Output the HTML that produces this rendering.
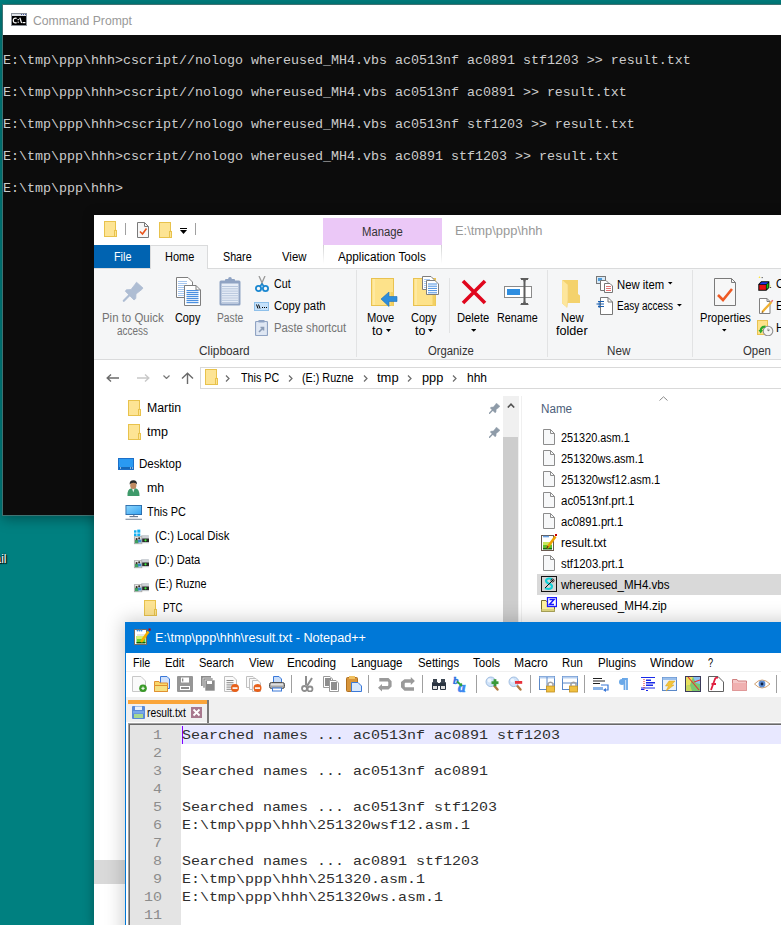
<!DOCTYPE html><html><head><meta charset="utf-8"><style>
html,body{margin:0;padding:0;}
body{width:781px;height:925px;overflow:hidden;position:relative;background:#008080;font-family:"Liberation Sans",sans-serif;}
.t{position:absolute;white-space:pre;transform-origin:0 0;}
.r{position:absolute;}
</style></head><body>
<div class="r" style="left:2px;top:4px;width:800px;height:512px;box-sizing:border-box;border:1px solid rgba(90,110,110,0.7);box-shadow:0 3px 12px rgba(0,0,0,0.35);"></div>
<div class="r" style="left:3px;top:5px;width:800px;height:30px;background:#fff;"></div>
<div class="r" style="left:3px;top:35px;width:800px;height:480px;background:#0c0c0c;"></div>
<div class="t" style="left:32.90px;top:12.64px;font-size:12.00px;line-height:16px;color:#999;transform-origin:0 12.16px;transform:scale(1.0168,1.0000);">Command Prompt</div>
<svg class="r" style="left:11px;top:13px;" width="16" height="13" viewBox="0 0 16 13"><rect x="0" y="0" width="16" height="13" fill="#8c929a"/><rect x="1" y="1" width="14" height="2" fill="#dde1e6"/><rect x="10" y="1" width="1" height="1" fill="#4a5a9a"/><rect x="12" y="1" width="1" height="1" fill="#4a5a9a"/><rect x="14" y="1" width="1" height="1" fill="#4a5a9a"/><rect x="1" y="3" width="14" height="9" fill="#000"/><path d="M5.6 5.4Q2.3 4.6 2.3 7.5Q2.3 10.4 5.6 9.6" stroke="#fff" stroke-width="1.3" fill="none"/><rect x="6.6" y="6" width="1.2" height="1.2" fill="#fff"/><rect x="6.6" y="8.6" width="1.2" height="1.2" fill="#fff"/><path d="M8.8 4.8L10.6 10" stroke="#fff" stroke-width="1.2"/><rect x="11.6" y="9" width="2.8" height="1.2" fill="#fff"/></svg>
<div class="t" style="left:-5.5px;top:552px;font-size:12px;line-height:14px;color:#fff;text-shadow:0 0 2px #000,1px 1px 1px #000;">ail</div>
<div class="t" style="left:3.00px;top:52.15px;font-size:13.33px;line-height:17px;color:#cccccc;;font-family:'Liberation Mono',monospace">E:\tmp\ppp\hhh&gt;cscript//nologo whereused_MH4.vbs ac0513nf ac0891 stf1203 &gt;&gt; result.txt</div>
<div class="t" style="left:3.00px;top:84.15px;font-size:13.33px;line-height:17px;color:#cccccc;;font-family:'Liberation Mono',monospace">E:\tmp\ppp\hhh&gt;cscript//nologo whereused_MH4.vbs ac0513nf ac0891 &gt;&gt; result.txt</div>
<div class="t" style="left:3.00px;top:116.15px;font-size:13.33px;line-height:17px;color:#cccccc;;font-family:'Liberation Mono',monospace">E:\tmp\ppp\hhh&gt;cscript//nologo whereused_MH4.vbs ac0513nf stf1203 &gt;&gt; result.txt</div>
<div class="t" style="left:3.00px;top:148.15px;font-size:13.33px;line-height:17px;color:#cccccc;;font-family:'Liberation Mono',monospace">E:\tmp\ppp\hhh&gt;cscript//nologo whereused_MH4.vbs ac0891 stf1203 &gt;&gt; result.txt</div>
<div class="t" style="left:3.00px;top:180.15px;font-size:13.33px;line-height:17px;color:#cccccc;;font-family:'Liberation Mono',monospace">E:\tmp\ppp\hhh&gt;</div>
<div class="r" style="left:94px;top:215px;width:700px;height:710px;background:#fff;box-shadow:0 0 10px 1px rgba(0,0,0,0.28);"></div>
<div class="r" style="left:94px;top:245px;width:56px;height:23px;background:#0063b1;"></div>
<div class="t" style="left:113.50px;top:248.94px;font-size:12.00px;line-height:16px;color:#fff;transform-origin:0 12.16px;transform:scale(0.9000,1.0000);">File</div>
<div class="r" style="left:323px;top:218px;width:119px;height:27px;background:#ebc8f7;"></div>
<div class="r" style="left:94px;top:268px;width:700px;height:92px;background:#f5f6f7;border-top:1px solid #dadbdc;border-bottom:1px solid #dadbdc;box-sizing:border-box;"></div>
<div class="r" style="left:150px;top:245px;width:58px;height:24px;background:#f5f6f7;border:1px solid #dadbdc;border-bottom:none;box-sizing:border-box;"></div>
<div class="r" style="left:323px;top:245px;width:1px;height:19px;background:linear-gradient(#d0d1d2,rgba(218,219,220,0));"></div>
<div class="r" style="left:441px;top:245px;width:1px;height:19px;background:linear-gradient(#d0d1d2,rgba(218,219,220,0));"></div>
<div class="t" style="left:164.50px;top:248.94px;font-size:12.00px;line-height:16px;color:#000;transform-origin:0 12.16px;transform:scale(0.9154,1.0000);">Home</div>
<div class="t" style="left:223.00px;top:248.94px;font-size:12.00px;line-height:16px;color:#000;transform-origin:0 12.16px;transform:scale(0.8931,1.0000);">Share</div>
<div class="t" style="left:281.60px;top:248.94px;font-size:12.00px;line-height:16px;color:#000;transform-origin:0 12.16px;transform:scale(0.9460,1.0000);">View</div>
<div class="t" style="left:337.50px;top:249.14px;font-size:12.00px;line-height:16px;color:#000;transform-origin:0 12.16px;transform:scale(0.9774,1.0000);">Application Tools</div>
<div class="t" style="left:361.60px;top:224.24px;font-size:12.00px;line-height:16px;color:#333;transform-origin:0 12.16px;transform:scale(0.9409,1.0000);">Manage</div>
<div class="t" style="left:455.30px;top:222.64px;font-size:12.00px;line-height:16px;color:#999;transform-origin:0 12.16px;transform:scale(1.0751,1.0000);">E:\tmp\ppp\hhh</div>
<div class="t" style="left:102.30px;top:310.44px;font-size:12.00px;line-height:16px;color:#737373;transform-origin:0 12.16px;transform:scale(0.9522,1.0000);">Pin to Quick</div>
<div class="t" style="left:117.30px;top:323.14px;font-size:12.00px;line-height:16px;color:#737373;transform-origin:0 12.16px;transform:scale(0.8301,1.0000);">access</div>
<div class="t" style="left:174.60px;top:310.44px;font-size:12.00px;line-height:16px;color:#000;transform-origin:0 12.16px;transform:scale(0.9032,1.0000);">Copy</div>
<div class="t" style="left:216.50px;top:310.44px;font-size:12.00px;line-height:16px;color:#737373;transform-origin:0 12.16px;transform:scale(0.8571,1.0000);">Paste</div>
<div class="t" style="left:199.30px;top:343.44px;font-size:12.00px;line-height:16px;color:#333;transform-origin:0 12.16px;transform:scale(0.9871,1.0000);">Clipboard</div>
<div class="t" style="left:273.80px;top:276.44px;font-size:12.00px;line-height:16px;color:#000;transform-origin:0 12.16px;transform:scale(0.8890,1.0000);">Cut</div>
<div class="t" style="left:273.80px;top:298.44px;font-size:12.00px;line-height:16px;color:#000;transform-origin:0 12.16px;transform:scale(0.9433,1.0000);">Copy path</div>
<div class="t" style="left:273.80px;top:320.44px;font-size:12.00px;line-height:16px;color:#737373;transform-origin:0 12.16px;transform:scale(0.9413,1.0000);">Paste shortcut</div>
<div class="r" style="left:356px;top:270px;width:1px;height:87px;background:#e2e3e4;"></div>
<div class="t" style="left:367.30px;top:310.44px;font-size:12.00px;line-height:16px;color:#000;transform-origin:0 12.16px;transform:scale(0.9304,1.0000);">Move</div>
<div class="t" style="left:372.30px;top:322.94px;font-size:12.00px;line-height:16px;color:#000;transform-origin:0 12.16px;transform:scale(1.0692,1.0000);">to</div>
<div class="t" style="left:410.60px;top:310.44px;font-size:12.00px;line-height:16px;color:#000;transform-origin:0 12.16px;transform:scale(0.9139,1.0000);">Copy</div>
<div class="t" style="left:414.60px;top:322.94px;font-size:12.00px;line-height:16px;color:#000;transform-origin:0 12.16px;transform:scale(1.0392,1.0000);">to</div>
<div class="t" style="left:427.50px;top:343.44px;font-size:12.00px;line-height:16px;color:#333;transform-origin:0 12.16px;transform:scale(0.9406,1.0000);">Organize</div>
<div class="r" style="left:449px;top:278px;width:1px;height:55px;background:#e2e3e4;"></div>
<div class="t" style="left:457.20px;top:310.44px;font-size:12.00px;line-height:16px;color:#000;transform-origin:0 12.16px;transform:scale(0.9312,1.0000);">Delete</div>
<div class="t" style="left:497.10px;top:310.44px;font-size:12.00px;line-height:16px;color:#000;transform-origin:0 12.16px;transform:scale(0.8973,1.0000);">Rename</div>
<div class="r" style="left:547px;top:270px;width:1px;height:87px;background:#e2e3e4;"></div>
<div class="t" style="left:561.00px;top:310.44px;font-size:12.00px;line-height:16px;color:#000;transform-origin:0 12.16px;transform:scale(0.9456,1.0000);">New</div>
<div class="t" style="left:556.40px;top:323.44px;font-size:12.00px;line-height:16px;color:#000;transform-origin:0 12.16px;transform:scale(1.0527,1.0000);">folder</div>
<div class="t" style="left:616.50px;top:276.74px;font-size:12.00px;line-height:16px;color:#000;transform-origin:0 12.16px;transform:scale(0.9418,1.0000);">New item</div>
<div class="t" style="left:616.50px;top:298.44px;font-size:12.00px;line-height:16px;color:#000;transform-origin:0 12.16px;transform:scale(0.8328,1.0000);">Easy access</div>
<div class="t" style="left:606.90px;top:343.44px;font-size:12.00px;line-height:16px;color:#333;transform-origin:0 12.16px;transform:scale(0.9706,1.0000);">New</div>
<div class="r" style="left:692px;top:270px;width:1px;height:87px;background:#e2e3e4;"></div>
<div class="t" style="left:699.70px;top:310.44px;font-size:12.00px;line-height:16px;color:#000;transform-origin:0 12.16px;transform:scale(0.9270,1.0000);">Properties</div>
<div class="t" style="left:743.40px;top:343.44px;font-size:12.00px;line-height:16px;color:#333;transform-origin:0 12.16px;transform:scale(0.9504,1.0000);">Open</div>
<div class="t" style="left:776.00px;top:276.44px;font-size:12.00px;line-height:16px;color:#000;transform-origin:0 12.16px;transform:scale(0.9400,1.0000);">O</div>
<div class="t" style="left:776.00px;top:298.44px;font-size:12.00px;line-height:16px;color:#000;transform-origin:0 12.16px;transform:scale(0.9400,1.0000);">E</div>
<div class="t" style="left:776.00px;top:320.44px;font-size:12.00px;line-height:16px;color:#000;transform-origin:0 12.16px;transform:scale(0.9400,1.0000);">H</div>
<div class="r" style="left:200px;top:367px;width:600px;height:22px;background:#fff;border:1px solid #d9d9d9;box-sizing:border-box;"></div>
<div class="t" style="left:240.70px;top:370.04px;font-size:12.00px;line-height:16px;color:#000;transform-origin:0 12.16px;transform:scale(0.8975,1.0000);">This PC</div>
<div class="t" style="left:302.30px;top:370.04px;font-size:12.00px;line-height:16px;color:#000;transform-origin:0 12.16px;transform:scale(0.8979,1.0000);">(E:) Ruzne</div>
<div class="t" style="left:376.70px;top:370.04px;font-size:12.00px;line-height:16px;color:#000;transform-origin:0 12.16px;transform:scale(1.0797,1.0000);">tmp</div>
<div class="t" style="left:422.00px;top:370.04px;font-size:12.00px;line-height:16px;color:#000;transform-origin:0 12.16px;transform:scale(1.0639,1.0000);">ppp</div>
<div class="t" style="left:466.70px;top:370.04px;font-size:12.00px;line-height:16px;color:#000;transform-origin:0 12.16px;transform:scale(0.9990,1.0000);">hhh</div>
<div class="t" style="left:147.40px;top:400.24px;font-size:12.00px;line-height:16px;color:#000;transform-origin:0 12.16px;transform:scale(1.0258,1.0000);">Martin</div>
<div class="t" style="left:147.40px;top:424.24px;font-size:12.00px;line-height:16px;color:#000;transform-origin:0 12.16px;transform:scale(1.0448,1.0000);">tmp</div>
<div class="t" style="left:139.20px;top:456.24px;font-size:12.00px;line-height:16px;color:#000;transform-origin:0 12.16px;transform:scale(0.9632,1.0000);">Desktop</div>
<div class="t" style="left:147.40px;top:480.24px;font-size:12.00px;line-height:16px;color:#000;transform-origin:0 12.16px;transform:scale(1.0318,1.0000);">mh</div>
<div class="t" style="left:147.40px;top:504.24px;font-size:12.00px;line-height:16px;color:#000;transform-origin:0 12.16px;transform:scale(0.9092,1.0000);">This PC</div>
<div class="t" style="left:155.40px;top:528.24px;font-size:12.00px;line-height:16px;color:#000;transform-origin:0 12.16px;transform:scale(0.9456,1.0000);">(C:) Local Disk</div>
<div class="t" style="left:155.40px;top:552.24px;font-size:12.00px;line-height:16px;color:#000;transform-origin:0 12.16px;transform:scale(0.9307,1.0000);">(D:) Data</div>
<div class="t" style="left:155.40px;top:576.24px;font-size:12.00px;line-height:16px;color:#000;transform-origin:0 12.16px;transform:scale(0.8997,1.0000);">(E:) Ruzne</div>
<div class="t" style="left:163.20px;top:600.04px;font-size:12.00px;line-height:16px;color:#000;transform-origin:0 12.16px;transform:scale(0.8167,1.0000);">PTC</div>
<div class="r" style="left:503px;top:396px;width:16px;height:600px;background:#f0f0f0;"></div>
<div class="r" style="left:503px;top:437px;width:15px;height:600px;background:#cdcdcd;"></div>
<div class="r" style="left:521px;top:396px;width:1px;height:600px;background:#f0f0f0;"></div>
<div class="t" style="left:540.70px;top:401.44px;font-size:12.00px;line-height:16px;color:#4c607a;transform-origin:0 12.16px;transform:scale(0.9716,1.0000);">Name</div>
<div class="r" style="left:537px;top:574px;width:260px;height:21px;background:#d9d9d9;"></div>
<div class="t" style="left:561.10px;top:430.04px;font-size:12.00px;line-height:16px;color:#000;transform-origin:0 12.16px;transform:scale(0.9046,1.0000);">251320.asm.1</div>
<div class="t" style="left:561.10px;top:451.04px;font-size:12.00px;line-height:16px;color:#000;transform-origin:0 12.16px;transform:scale(0.9127,1.0000);">251320ws.asm.1</div>
<div class="t" style="left:561.10px;top:472.04px;font-size:12.00px;line-height:16px;color:#000;transform-origin:0 12.16px;transform:scale(0.9236,1.0000);">251320wsf12.asm.1</div>
<div class="t" style="left:561.10px;top:493.04px;font-size:12.00px;line-height:16px;color:#000;transform-origin:0 12.16px;transform:scale(0.9554,1.0000);">ac0513nf.prt.1</div>
<div class="t" style="left:561.10px;top:514.04px;font-size:12.00px;line-height:16px;color:#000;transform-origin:0 12.16px;transform:scale(0.9338,1.0000);">ac0891.prt.1</div>
<div class="t" style="left:561.10px;top:535.04px;font-size:12.00px;line-height:16px;color:#000;transform-origin:0 12.16px;transform:scale(0.9968,1.0000);">result.txt</div>
<div class="t" style="left:561.10px;top:556.04px;font-size:12.00px;line-height:16px;color:#000;transform-origin:0 12.16px;transform:scale(0.9459,1.0000);">stf1203.prt.1</div>
<div class="t" style="left:561.10px;top:577.04px;font-size:12.00px;line-height:16px;color:#000;transform-origin:0 12.16px;transform:scale(0.9626,1.0000);">whereused_MH4.vbs</div>
<div class="t" style="left:561.10px;top:598.04px;font-size:12.00px;line-height:16px;color:#000;transform-origin:0 12.16px;transform:scale(0.9672,1.0000);">whereused_MH4.zip</div>
<div class="r" style="left:94px;top:860px;width:31px;height:24px;background:#d9d9d9;"></div>
<svg class="r" style="left:104px;top:221px;" width="13" height="16" viewBox="0 0 13 16"><rect x="0.5" y="0.5" width="11" height="15" fill="#fde494" stroke="#e8c24c"/><rect x="10.5" y="9.46" width="2" height="6.039999999999999" fill="#fde494" stroke="#e8c24c"/></svg>
<div class="r" style="left:125px;top:223px;width:1px;height:12px;background:#a0a0a0;"></div>
<svg class="r" style="left:137px;top:222px;" width="12" height="16" viewBox="0 0 12 16"><path d="M0.5 0.5H7.5 L11.5 4.5 V15.5 H0.5Z" fill="#f7f7f7" stroke="#7a7a7a"/><path d="M7.5 0.5V4.5H11.5" fill="none" stroke="#7a7a7a"/><path d="M3 9.5L5.5 12L9.5 6.5" fill="none" stroke="#e8541c" stroke-width="1.6"/></svg>
<svg class="r" style="left:159px;top:222px;" width="13" height="16" viewBox="0 0 13 16"><rect x="0.5" y="0.5" width="11" height="15" fill="#fde494" stroke="#e8c24c"/><rect x="10.5" y="9.46" width="2" height="6.039999999999999" fill="#fde494" stroke="#e8c24c"/></svg>
<div class="r" style="left:180px;top:228px;width:7px;height:1px;background:#000;"></div>
<svg class="r" style="left:180px;top:230px;" width="7" height="4" viewBox="0 0 7 4"><path d="M0 0H7L3.5 4Z" fill="#000"/></svg>
<div class="r" style="left:195px;top:223px;width:1px;height:12px;background:#a0a0a0;"></div>
<svg class="r" style="left:118px;top:278px;" width="30" height="28" viewBox="0 0 30 28"><path d="M12 16.5L5.8 22.8" stroke="#aebdd3" stroke-width="2.2" stroke-linecap="round"/><path d="M18.5 4.2L25 10L23.8 11.5L18 16L17.8 20.5L16 22L7.3 13.2L8.3 11.8L13 11.5L17.3 6Z" fill="#aebdd3" stroke="#aebdd3" stroke-width="0.8" stroke-linejoin="round"/></svg>
<svg class="r" style="left:176px;top:277px;" width="25" height="29" viewBox="0 0 25 29"><path d="M0.5 0.5H12L16.5 5V20.5H0.5Z" fill="#fff" stroke="#7e7e7e"/><rect x="2" y="4" width="9" height="1" fill="#a8c8f0"/><rect x="2" y="6" width="9" height="1" fill="#a8c8f0"/><rect x="2" y="8" width="9" height="1" fill="#a8c8f0"/><rect x="2" y="10" width="9" height="1" fill="#a8c8f0"/><rect x="2" y="12" width="9" height="1" fill="#a8c8f0"/><rect x="2" y="14" width="9" height="1" fill="#a8c8f0"/><rect x="2" y="16" width="9" height="1" fill="#a8c8f0"/><rect x="2" y="18" width="9" height="1" fill="#a8c8f0"/><path d="M8.5 8.5H20L24.5 13V28.5H8.5Z" fill="#fff" stroke="#7e7e7e"/><path d="M20 8.5V13H24.5" fill="none" stroke="#7e7e7e"/><rect x="10.5" y="13" width="12" height="1.2" fill="#4a8fe0"/><rect x="10.5" y="15" width="12" height="1.2" fill="#4a8fe0"/><rect x="10.5" y="17" width="12" height="1.2" fill="#4a8fe0"/><rect x="10.5" y="19" width="12" height="1.2" fill="#4a8fe0"/><rect x="10.5" y="21" width="12" height="1.2" fill="#4a8fe0"/><rect x="10.5" y="23" width="12" height="1.2" fill="#4a8fe0"/><rect x="10.5" y="25" width="12" height="1.2" fill="#4a8fe0"/></svg>
<svg class="r" style="left:219px;top:277px;" width="22" height="29" viewBox="0 0 22 29"><rect x="0.5" y="3.5" width="21" height="25" rx="1.5" fill="#8fa3c3"/><rect x="2.5" y="6.5" width="17" height="20" fill="#e6edf7"/><rect x="3" y="9.0" width="16" height="1" fill="#b7c6dc"/><rect x="3" y="11.3" width="16" height="1" fill="#b7c6dc"/><rect x="3" y="13.6" width="16" height="1" fill="#b7c6dc"/><rect x="3" y="15.899999999999999" width="16" height="1" fill="#b7c6dc"/><rect x="3" y="18.2" width="16" height="1" fill="#b7c6dc"/><rect x="3" y="20.5" width="16" height="1" fill="#b7c6dc"/><rect x="3" y="22.799999999999997" width="16" height="1" fill="#b7c6dc"/><rect x="3" y="25.099999999999998" width="16" height="1" fill="#b7c6dc"/><rect x="6" y="2" width="10" height="4" rx="1" fill="#8fa3c3"/><circle cx="11" cy="1.8" r="1.8" fill="#8fa3c3"/></svg>
<svg class="r" style="left:255px;top:276px;" width="14" height="16" viewBox="0 0 14 16"><path d="M4 0L8 9M10 0L6 9" stroke="#9a9a9a" stroke-width="1.3"/><ellipse cx="3.5" cy="12.5" rx="2.6" ry="2.6" fill="none" stroke="#1a87d0" stroke-width="1.8"/><ellipse cx="10.5" cy="12.5" rx="2.6" ry="2.6" fill="none" stroke="#1a87d0" stroke-width="1.8"/><path d="M5 10.5L7 8L9 10.5" stroke="#1a87d0" stroke-width="1.5" fill="none"/></svg>
<svg class="r" style="left:254px;top:302px;" width="15" height="9" viewBox="0 0 15 9"><rect x="0.5" y="0.5" width="14" height="8" fill="#c5e1fa" stroke="#8ec0ea"/><path d="M2.5 2.5L4 6.5M4.5 2.5L6 6.5" stroke="#000" stroke-width="1"/><rect x="8" y="5" width="1" height="1" fill="#000" shape-rendering="crispEdges"/><rect x="10" y="5" width="1" height="1" fill="#000" shape-rendering="crispEdges"/><rect x="12" y="5" width="1" height="1" fill="#000" shape-rendering="crispEdges"/></svg>
<svg class="r" style="left:255px;top:320px;" width="13" height="16" viewBox="0 0 13 16"><rect x="0.5" y="1.5" width="12" height="14" rx="1" fill="#dfe7f3" stroke="#8fa3c3" stroke-width="1.2"/><rect x="3.5" y="0" width="6" height="2.5" fill="#8fa3c3"/><path d="M4 12L8 8M5.5 7.5H8.5V10.5" stroke="#8a9bb5" stroke-width="1.6" fill="none"/></svg>
<svg class="r" style="left:371px;top:278px;" width="27" height="29" viewBox="0 0 27 29"><rect x="0.5" y="0.5" width="22" height="27" fill="#fde28a" stroke="#e9c250"/><rect x="2.5" y="1" width="1" height="26" fill="#fff0b8"/><rect x="19.5" y="14" width="3" height="14" fill="#f2cf62"/><path d="M26 18.5H18V14L10 21L18 28.5V23.5H26Z" fill="#2e8ddb" stroke="#1e6fb8" stroke-width="0.6"/></svg>
<svg class="r" style="left:385.6px;top:329px;" width="5" height="3" viewBox="0 0 5 3"><path d="M0 0H5L2.5 3Z" fill="#000"/></svg>
<svg class="r" style="left:413px;top:276px;" width="27" height="31" viewBox="0 0 27 31"><rect x="0.5" y="2.5" width="22" height="27" fill="#fde28a" stroke="#e9c250"/><rect x="2.5" y="3" width="1" height="26" fill="#fff0b8"/><rect x="19.5" y="17" width="3" height="13" fill="#f2cf62"/><path d="M9.5 0.5H18L21 3.5V13.5H9.5Z" fill="#fff" stroke="#7e7e7e"/><rect x="11" y="3" width="6" height="1" fill="#a8c8f0"/><rect x="11" y="5" width="6" height="1" fill="#a8c8f0"/><rect x="11" y="7" width="6" height="1" fill="#a8c8f0"/><rect x="11" y="9" width="6" height="1" fill="#a8c8f0"/><rect x="11" y="11" width="6" height="1" fill="#a8c8f0"/><path d="M13.5 4.5H22L25.5 8V18.5H13.5Z" fill="#fff" stroke="#7e7e7e"/><rect x="15" y="7.5" width="9" height="1" fill="#4a8fe0"/><rect x="15" y="9.7" width="9" height="1" fill="#4a8fe0"/><rect x="15" y="11.9" width="9" height="1" fill="#4a8fe0"/><rect x="15" y="14.100000000000001" width="9" height="1" fill="#4a8fe0"/><rect x="15" y="16.3" width="9" height="1" fill="#4a8fe0"/></svg>
<svg class="r" style="left:428px;top:329px;" width="5" height="3" viewBox="0 0 5 3"><path d="M0 0H5L2.5 3Z" fill="#000"/></svg>
<svg class="r" style="left:461px;top:279px;" width="26" height="26" viewBox="0 0 26 26"><path d="M2 2L24 24M24 2L2 24" stroke="#e0061d" stroke-width="3.6"/></svg>
<svg class="r" style="left:471px;top:329px;" width="5.4" height="2.7" viewBox="0 0 5.4 2.7"><path d="M0 0H5.4L2.7 2.7Z" fill="#000"/></svg>
<svg class="r" style="left:503px;top:278px;" width="30" height="27" viewBox="0 0 30 27"><rect x="1.5" y="8.5" width="27" height="11" fill="#fff" stroke="#8a8a8a"/><rect x="4" y="11" width="13" height="6" fill="#2f8ee0"/><path d="M18 1H25M18 26H25M21.5 1.5V25.5" stroke="#5e5e5e" stroke-width="2" fill="none"/><path d="M17.5 0.5Q21.5 1 21.5 4M25.5 0.5Q21.5 1 21.5 4M17.5 26.5Q21.5 26 21.5 23M25.5 26.5Q21.5 26 21.5 23" stroke="#5e5e5e" stroke-width="1.2" fill="none"/></svg>
<svg class="r" style="left:561px;top:279px;" width="21" height="30" viewBox="0 0 21 30"><path d="M1.2 1H17V15L19 16.5V24H6V28.5L1.2 24.5Z" fill="#f4d26c"/><path d="M1.2 1L7 6V21L6 28.5L1.2 24.5Z" fill="#fde69c"/><path d="M7 6V21L6 28.5" stroke="#f0d080" stroke-width="0.6" fill="none"/></svg>
<svg class="r" style="left:596px;top:276px;" width="17" height="17" viewBox="0 0 17 17"><rect x="0.5" y="0.5" width="9" height="7" fill="#d6e9f8" stroke="#777"/><rect x="2" y="2" width="4" height="3" fill="#4e9bd8"/><path d="M4.5 4.5H10L12 6.5V14.5H4.5Z" fill="#fff" stroke="#777"/><path d="M8.5 7.5H14L16.5 10V16.5H8.5Z" fill="#fff" stroke="#777"/><rect x="10" y="10" width="5" height="0.8" fill="#e05050"/><rect x="10" y="12" width="5" height="0.8" fill="#e05050"/><rect x="10" y="14" width="5" height="0.8" fill="#e05050"/></svg>
<svg class="r" style="left:668.2px;top:282px;" width="4.5" height="2.6" viewBox="0 0 4.5 2.6"><path d="M0 0H4.5L2.25 2.6Z" fill="#000"/></svg>
<svg class="r" style="left:596px;top:297px;" width="17" height="18" viewBox="0 0 17 18"><path d="M4.5 0.5H12L16.5 5V17.5H4.5Z" fill="#fff" stroke="#777"/><path d="M12 0.5V5H16.5" fill="none" stroke="#777"/><path d="M2 4.5H8M0.5 7H8M2 9.5H8" stroke="#1a5fb0" stroke-width="1.1"/><path d="M3.2 4V11" stroke="#1a5fb0" stroke-width="0.9"/></svg>
<svg class="r" style="left:677px;top:304px;" width="4.9" height="2.6" viewBox="0 0 4.9 2.6"><path d="M0 0H4.9L2.45 2.6Z" fill="#000"/></svg>
<svg class="r" style="left:714px;top:278px;" width="22" height="28" viewBox="0 0 22 28"><path d="M0.5 0.5H17.5 L21.5 4.5 V27.5 H0.5Z" fill="#f7f7f7" stroke="#7a7a7a"/><path d="M17.5 0.5V4.5H21.5" fill="none" stroke="#7a7a7a"/><path d="M4 17L9 22L18 11" fill="none" stroke="#ee5a24" stroke-width="2.6"/></svg>
<svg class="r" style="left:722.2px;top:329.3px;" width="4.6" height="2.6" viewBox="0 0 4.6 2.6"><path d="M0 0H4.6L2.3 2.6Z" fill="#000"/></svg>
<svg class="r" style="left:757px;top:276px;" width="24" height="60" viewBox="0 0 24 60"><path d="M1.3 8.2L4.2 5.3H12.3V11.8L9.4 14.7H1.3Z" fill="#000"/><path d="M2.4 8.2L4.6 6.2H11.3L9.1 8.2Z" fill="#1a3ae8"/><rect x="2.3" y="8.9" width="6.6" height="4.9" fill="#e81010"/><path d="M9.6 8.6L11.5 6.7V11.5L9.6 13.5Z" fill="#18c018"/><path d="M1.5 1.8L2.5 0.3L3.5 1.8Z" fill="#ffe000"/><rect x="4.7" y="1.2" width="0.9" height="0.9" fill="#000"/><rect x="13.2" y="11" width="0.9" height="0.9" fill="#000"/><rect x="12.5" y="9.5" width="1" height="1" fill="#ffe000"/><path d="M2.5 22.5H10L13 25.5V37.5H2.5Z" fill="#fff" stroke="#808080"/><path d="M10 22.5V25.5H13" fill="none" stroke="#808080"/><path d="M5.2 36L14.5 26" stroke="#f0b030" stroke-width="2.2"/><path d="M13.8 25.2L15.3 23.8L16.3 24.8L14.9 26.3Z" fill="#e86060"/><path d="M4.5 37L5.2 35.2L6.4 36.3Z" fill="#604020"/><rect x="0.5" y="44.5" width="10" height="14" fill="#fde28a" stroke="#e9c250"/><circle cx="11" cy="55" r="4.8" fill="#f4f4f4" stroke="#909090" stroke-width="1.1"/><path d="M11 52.5V55L12.8 53.8" stroke="#555" stroke-width="0.7" fill="none"/><path d="M8.5 50.5Q4 50.5 3.5 55" stroke="#2aa82a" stroke-width="2" fill="none"/><path d="M1.5 54L3.7 57.5L6 54Z" fill="#2aa82a"/></svg>
<svg class="r" style="left:106px;top:374px;" width="14" height="8" viewBox="0 0 14 8"><path d="M13 4H1.5M5 0.5L1.2 4L5 7.5" fill="none" stroke="#6b6b6b" stroke-width="1.4"/></svg>
<svg class="r" style="left:136px;top:374px;" width="14" height="8" viewBox="0 0 14 8"><path d="M1 4H12.5M9 0.5L12.8 4L9 7.5" fill="none" stroke="#c8c8c8" stroke-width="1.4"/></svg>
<svg class="r" style="left:163px;top:375px;" width="7" height="4" viewBox="0 0 7 4"><path d="M0.5 0.5L3.5 3.5L6.5 0.5" fill="none" stroke="#777" stroke-width="1.2"/></svg>
<svg class="r" style="left:181px;top:372px;" width="13" height="12" viewBox="0 0 13 12"><path d="M6.5 12V1.5M1 6.5L6.5 1.2L12 6.5" fill="none" stroke="#6b6b6b" stroke-width="1.4"/></svg>
<svg class="r" style="left:205px;top:369px;" width="13" height="16" viewBox="0 0 13 16"><rect x="0.5" y="0.5" width="11" height="15" fill="#fde494" stroke="#e8c24c"/><rect x="10.5" y="9.46" width="2" height="6.039999999999999" fill="#fde494" stroke="#e8c24c"/></svg>
<svg class="r" style="left:224.8px;top:375px;" width="5" height="7" viewBox="0 0 5 7"><path d="M1 0.5L4 3.5L1 6.5" fill="none" stroke="#6b6b6b" stroke-width="1.2"/></svg>
<svg class="r" style="left:287.5px;top:375px;" width="5" height="7" viewBox="0 0 5 7"><path d="M1 0.5L4 3.5L1 6.5" fill="none" stroke="#6b6b6b" stroke-width="1.2"/></svg>
<svg class="r" style="left:362.9px;top:375px;" width="5" height="7" viewBox="0 0 5 7"><path d="M1 0.5L4 3.5L1 6.5" fill="none" stroke="#6b6b6b" stroke-width="1.2"/></svg>
<svg class="r" style="left:407.3px;top:375px;" width="5" height="7" viewBox="0 0 5 7"><path d="M1 0.5L4 3.5L1 6.5" fill="none" stroke="#6b6b6b" stroke-width="1.2"/></svg>
<svg class="r" style="left:452px;top:375px;" width="5" height="7" viewBox="0 0 5 7"><path d="M1 0.5L4 3.5L1 6.5" fill="none" stroke="#6b6b6b" stroke-width="1.2"/></svg>
<svg class="r" style="left:489px;top:403px;" width="11" height="11" viewBox="0 0 11 11"><g transform="translate(-2.6,-2.1) scale(0.54)"><path d="M12 16.5L5.8 22.8" stroke="#8e9ba8" stroke-width="2.6" stroke-linecap="round"/><path d="M18.5 4.2L25 10L23.8 11.5L18 16L17.8 20.5L16 22L7.3 13.2L8.3 11.8L13 11.5L17.3 6Z" fill="#8e9ba8" stroke="#8e9ba8" stroke-width="1" stroke-linejoin="round"/></g></svg>
<svg class="r" style="left:489px;top:427px;" width="11" height="11" viewBox="0 0 11 11"><g transform="translate(-2.6,-2.1) scale(0.54)"><path d="M12 16.5L5.8 22.8" stroke="#8e9ba8" stroke-width="2.6" stroke-linecap="round"/><path d="M18.5 4.2L25 10L23.8 11.5L18 16L17.8 20.5L16 22L7.3 13.2L8.3 11.8L13 11.5L17.3 6Z" fill="#8e9ba8" stroke="#8e9ba8" stroke-width="1" stroke-linejoin="round"/></g></svg>
<svg class="r" style="left:507px;top:403px;" width="8" height="5" viewBox="0 0 8 5"><path d="M0.8 4.5L4 1.2L7.2 4.5" fill="none" stroke="#505050" stroke-width="1.6"/></svg>
<svg class="r" style="left:659px;top:396px;" width="9" height="5" viewBox="0 0 9 5"><path d="M0.5 4.5L4.5 0.8L8.5 4.5" fill="none" stroke="#8a8a8a" stroke-width="1"/></svg>
<svg class="r" style="left:128px;top:400px;" width="13" height="16" viewBox="0 0 13 16"><rect x="0.5" y="0.5" width="11" height="15" fill="#fde494" stroke="#e8c24c"/><rect x="10.5" y="9.46" width="2" height="6.039999999999999" fill="#fde494" stroke="#e8c24c"/></svg>
<svg class="r" style="left:128px;top:424px;" width="13" height="16" viewBox="0 0 13 16"><rect x="0.5" y="0.5" width="11" height="15" fill="#fde494" stroke="#e8c24c"/><rect x="10.5" y="9.46" width="2" height="6.039999999999999" fill="#fde494" stroke="#e8c24c"/></svg>
<svg class="r" style="left:118px;top:458px;" width="16" height="12" viewBox="0 0 16 12"><rect x="0" y="0" width="16" height="12" fill="#1d6fc8"/><rect x="1" y="1" width="14" height="10" fill="#2a9af2"/><rect x="1" y="9" width="14" height="2" fill="#1668b8"/><rect x="2" y="9.5" width="1" height="1" fill="#fff"/><rect x="12" y="9.5" width="1" height="1" fill="#fff"/><rect x="14" y="9.5" width="1" height="1" fill="#fff"/></svg>
<svg class="r" style="left:126px;top:479px;" width="16" height="17" viewBox="0 0 16 17"><path d="M1.5 17Q1 10 5.5 9.3H9.5Q13.5 10 13.5 17Z" fill="#3e9a6a"/><path d="M6 9.5L7.3 13.5L8.6 9.5Z" fill="#e8f4f0"/><ellipse cx="7.3" cy="6.4" rx="3.1" ry="3.5" fill="#c08a60"/><path d="M3.6 5.5Q3.5 1.2 7.5 1.3Q11.3 1.5 11 5.5Q10.2 3.6 7.5 3.7Q5 3.6 3.6 5.5Z" fill="#2a2a2a"/></svg>
<svg class="r" style="left:125px;top:505px;" width="18" height="16" viewBox="0 0 18 16"><defs><linearGradient id="pcg" x1="0" y1="0" x2="1" y2="1"><stop offset="0" stop-color="#8ad4fc"/><stop offset="1" stop-color="#3aa6f2"/></linearGradient></defs><rect x="0.5" y="0" width="16.5" height="10" fill="#2a6aa8"/><rect x="1.4" y="0.9" width="14.7" height="8.2" fill="url(#pcg)"/><rect x="8" y="10" width="1.5" height="1" fill="#8a9ab0"/><rect x="4.5" y="11" width="8.5" height="1.2" fill="#6a7a90"/><rect x="0.5" y="13.7" width="16.5" height="1.2" fill="#8a98a8"/></svg>
<svg class="r" style="left:133px;top:529px;" width="17" height="16" viewBox="0 0 17 16"><rect x="8" y="6" width="8" height="4" rx="0.8" fill="#cdd1d6"/><rect x="8" y="9.5" width="8" height="3.5" fill="#2a2a2a"/><circle cx="12.5" cy="11.3" r="1.1" fill="#3cf03c"/><rect x="8" y="13" width="8" height="1.2" fill="#c4c8cc"/><rect x="1.4" y="7.7" width="7.4" height="7" fill="#f2f2f2" stroke="#a8a8a8" stroke-width="0.9"/><rect x="2" y="11" width="3.5" height="3.2" fill="#40a060"/><rect x="5" y="10.5" width="3.3" height="3" fill="#3a88c8"/><circle cx="3.6" cy="10.2" r="1.1" fill="#3a3028"/><circle cx="6.2" cy="9.3" r="1.1" fill="#3a3028"/><rect x="1" y="1.3" width="2.5" height="2.4" fill="#12aef0"/><rect x="4.3" y="0.6" width="3" height="3.1" fill="#12aef0"/><rect x="1" y="4.5" width="2.5" height="2.6" fill="#12aef0"/><rect x="4.3" y="4.5" width="3" height="2.6" fill="#12aef0"/></svg>
<svg class="r" style="left:133px;top:553px;" width="17" height="16" viewBox="0 0 17 16"><rect x="8" y="6" width="8" height="4" rx="0.8" fill="#cdd1d6"/><rect x="8" y="9.5" width="8" height="3.5" fill="#2a2a2a"/><circle cx="12.5" cy="11.3" r="1.1" fill="#3cf03c"/><rect x="8" y="13" width="8" height="1.2" fill="#c4c8cc"/><rect x="1.4" y="7.7" width="7.4" height="7" fill="#f2f2f2" stroke="#a8a8a8" stroke-width="0.9"/><rect x="2" y="11" width="3.5" height="3.2" fill="#40a060"/><rect x="5" y="10.5" width="3.3" height="3" fill="#3a88c8"/><circle cx="3.6" cy="10.2" r="1.1" fill="#3a3028"/><circle cx="6.2" cy="9.3" r="1.1" fill="#3a3028"/></svg>
<svg class="r" style="left:133px;top:577px;" width="17" height="16" viewBox="0 0 17 16"><rect x="8" y="6" width="8" height="4" rx="0.8" fill="#cdd1d6"/><rect x="8" y="9.5" width="8" height="3.5" fill="#2a2a2a"/><circle cx="12.5" cy="11.3" r="1.1" fill="#3cf03c"/><rect x="8" y="13" width="8" height="1.2" fill="#c4c8cc"/><rect x="1.4" y="7.7" width="7.4" height="7" fill="#f2f2f2" stroke="#a8a8a8" stroke-width="0.9"/><rect x="2" y="11" width="3.5" height="3.2" fill="#40a060"/><rect x="5" y="10.5" width="3.3" height="3" fill="#3a88c8"/><circle cx="3.6" cy="10.2" r="1.1" fill="#3a3028"/><circle cx="6.2" cy="9.3" r="1.1" fill="#3a3028"/></svg>
<svg class="r" style="left:144px;top:600px;" width="13" height="16" viewBox="0 0 13 16"><rect x="0.5" y="0.5" width="11" height="15" fill="#fde494" stroke="#e8c24c"/><rect x="10.5" y="9.46" width="2" height="6.039999999999999" fill="#fde494" stroke="#e8c24c"/></svg>
<svg class="r" style="left:543px;top:429px;" width="12" height="16" viewBox="0 0 12 16"><path d="M0.5 0.5H7.5 L11.5 4.5 V15.5 H0.5Z" fill="#f7f8f9" stroke="#8c8c8c"/><path d="M7.5 0.5V4.5H11.5" fill="none" stroke="#8c8c8c"/></svg>
<svg class="r" style="left:543px;top:450px;" width="12" height="16" viewBox="0 0 12 16"><path d="M0.5 0.5H7.5 L11.5 4.5 V15.5 H0.5Z" fill="#f7f8f9" stroke="#8c8c8c"/><path d="M7.5 0.5V4.5H11.5" fill="none" stroke="#8c8c8c"/></svg>
<svg class="r" style="left:543px;top:471px;" width="12" height="16" viewBox="0 0 12 16"><path d="M0.5 0.5H7.5 L11.5 4.5 V15.5 H0.5Z" fill="#f7f8f9" stroke="#8c8c8c"/><path d="M7.5 0.5V4.5H11.5" fill="none" stroke="#8c8c8c"/></svg>
<svg class="r" style="left:543px;top:492px;" width="12" height="16" viewBox="0 0 12 16"><path d="M0.5 0.5H7.5 L11.5 4.5 V15.5 H0.5Z" fill="#f7f8f9" stroke="#8c8c8c"/><path d="M7.5 0.5V4.5H11.5" fill="none" stroke="#8c8c8c"/></svg>
<svg class="r" style="left:543px;top:513px;" width="12" height="16" viewBox="0 0 12 16"><path d="M0.5 0.5H7.5 L11.5 4.5 V15.5 H0.5Z" fill="#f7f8f9" stroke="#8c8c8c"/><path d="M7.5 0.5V4.5H11.5" fill="none" stroke="#8c8c8c"/></svg>
<svg class="r" style="left:543px;top:555px;" width="12" height="16" viewBox="0 0 12 16"><path d="M0.5 0.5H7.5 L11.5 4.5 V15.5 H0.5Z" fill="#f7f8f9" stroke="#8c8c8c"/><path d="M7.5 0.5V4.5H11.5" fill="none" stroke="#8c8c8c"/></svg>
<svg class="r" style="left:541px;top:534px;" width="16" height="17" viewBox="0 0 16 17"><rect x="0.5" y="1.5" width="12" height="15" fill="#fff" stroke="#6a5a50"/><rect x="2" y="8" width="9" height="7" fill="#5fc02a"/><rect x="2" y="8" width="9" height="3" fill="#c8e85a"/><rect x="2" y="14" width="9" height="1.5" fill="#1a6a10"/><circle cx="3" cy="2.5" r="0.9" fill="#4a90e0"/><circle cx="5" cy="2.5" r="0.9" fill="#4a90e0"/><circle cx="7" cy="2.5" r="0.9" fill="#4a90e0"/><path d="M6 14L14.5 2.5" stroke="#f0a000" stroke-width="2.6"/><path d="M6 14L7 12" stroke="#604020" stroke-width="1.5"/><rect x="14" y="0" width="2" height="2" fill="#c00"/></svg>
<svg class="r" style="left:541px;top:576px;" width="16" height="16" viewBox="0 0 16 16"><rect x="0.5" y="0.5" width="15" height="15" fill="#d4d4d4" stroke="#111"/><path d="M11 3Q6 1.5 5 4.5Q5 7 9 8Q12 9.5 10.5 12Q8 14 4 12" fill="none" stroke="#10d0d8" stroke-width="2.2"/><path d="M4 12L12 4" stroke="#111" stroke-width="1"/><circle cx="11.5" cy="4.5" r="1.5" fill="none" stroke="#111" stroke-width="0.9"/></svg>
<svg class="r" style="left:541px;top:597px;" width="16" height="15" viewBox="0 0 16 15"><path d="M0.5 3.5H5L6 5H13.5V14.5H0.5Z" fill="#fff3a0" stroke="#777030"/><rect x="0.5" y="12" width="13" height="2.5" fill="#e0d880"/><rect x="6.5" y="0.5" width="9" height="9" fill="#fff" stroke="#1a1aff" stroke-width="1.3"/><path d="M8.5 2.5H13L8.5 7.5H13" fill="none" stroke="#1a1aff" stroke-width="1.5"/></svg>
<div class="r" style="left:125px;top:622px;width:700px;height:400px;box-shadow:0 0 18px 2px rgba(0,0,0,0.2);"></div>
<div class="r" style="left:125px;top:622px;width:700px;height:400px;background:#fff;"></div>
<div class="r" style="left:125px;top:622px;width:700px;height:31px;background:#0078d7;"></div>
<div class="r" style="left:125px;top:653px;width:1px;height:300px;background:#0078d7;"></div>
<div class="t" style="left:155.00px;top:630.04px;font-size:12.00px;line-height:16px;color:#fff;transform-origin:0 12.16px;transform:scale(1.0544,1.0000);">E:\tmp\ppp\hhh\result.txt - Notepad++</div>
<div class="t" style="left:133.20px;top:655.24px;font-size:12.00px;line-height:16px;color:#000;transform-origin:0 12.16px;transform:scale(0.8948,1.0000);">File</div>
<div class="t" style="left:164.90px;top:655.24px;font-size:12.00px;line-height:16px;color:#000;transform-origin:0 12.16px;transform:scale(0.9382,1.0000);">Edit</div>
<div class="t" style="left:198.70px;top:655.24px;font-size:12.00px;line-height:16px;color:#000;transform-origin:0 12.16px;transform:scale(0.9205,1.0000);">Search</div>
<div class="t" style="left:248.50px;top:655.24px;font-size:12.00px;line-height:16px;color:#000;transform-origin:0 12.16px;transform:scale(0.9499,1.0000);">View</div>
<div class="t" style="left:287.40px;top:655.24px;font-size:12.00px;line-height:16px;color:#000;transform-origin:0 12.16px;transform:scale(0.9793,1.0000);">Encoding</div>
<div class="t" style="left:351.20px;top:655.24px;font-size:12.00px;line-height:16px;color:#000;transform-origin:0 12.16px;transform:scale(0.9646,1.0000);">Language</div>
<div class="t" style="left:417.50px;top:655.24px;font-size:12.00px;line-height:16px;color:#000;transform-origin:0 12.16px;transform:scale(0.9479,1.0000);">Settings</div>
<div class="t" style="left:473.00px;top:655.24px;font-size:12.00px;line-height:16px;color:#000;transform-origin:0 12.16px;transform:scale(0.9639,1.0000);">Tools</div>
<div class="t" style="left:514.40px;top:655.24px;font-size:12.00px;line-height:16px;color:#000;transform-origin:0 12.16px;transform:scale(1.0138,1.0000);">Macro</div>
<div class="t" style="left:562.10px;top:655.24px;font-size:12.00px;line-height:16px;color:#000;transform-origin:0 12.16px;transform:scale(0.9404,1.0000);">Run</div>
<div class="t" style="left:597.60px;top:655.24px;font-size:12.00px;line-height:16px;color:#000;transform-origin:0 12.16px;transform:scale(0.9655,1.0000);">Plugins</div>
<div class="t" style="left:650.40px;top:655.24px;font-size:12.00px;line-height:16px;color:#000;transform-origin:0 12.16px;transform:scale(1.0193,1.0000);">Window</div>
<div class="t" style="left:707.90px;top:655.24px;font-size:12.00px;line-height:16px;color:#000;transform-origin:0 12.16px;transform:scale(0.7642,1.0000);">?</div>
<div class="r" style="left:126px;top:671px;width:700px;height:1px;background:#f0f0f0;"></div>
<div class="r" style="left:126px;top:697px;width:700px;height:1px;background:#f0f0f0;"></div>
<div class="r" style="left:126px;top:698px;width:700px;height:24px;background:#f0f0f0;"></div>
<div class="r" style="left:126px;top:722px;width:700px;height:1px;background:#fff;"></div>
<div class="r" style="left:128px;top:700px;width:80px;height:22px;background:#f0f0f0;"></div>
<div class="r" style="left:128px;top:700px;width:79px;height:4px;background:#faa53a;"></div>
<div class="r" style="left:207px;top:700px;width:2px;height:23px;background:#7a7a7a;"></div>
<svg class="r" style="left:134px;top:628px;" width="17" height="17" viewBox="0 0 17 17"><rect x="0.5" y="1.5" width="12" height="15" fill="#fff" stroke="#7a6a60"/><rect x="3" y="6.5" width="8" height="1" fill="#ccc"/><rect x="2.5" y="8" width="9" height="7" fill="#6bd030"/><rect x="2.5" y="8" width="9" height="3" fill="#d8f070"/><rect x="2.5" y="14" width="9" height="1.5" fill="#106010"/><circle cx="3.5" cy="2.5" r="0.9" fill="#3a8ae0"/><circle cx="5.5" cy="2.5" r="0.9" fill="#3a8ae0"/><circle cx="7.5" cy="2.5" r="0.9" fill="#3a8ae0"/><path d="M7 14L14.5 3.5" stroke="#f5b000" stroke-width="2.6"/><rect x="14.5" y="0.5" width="2.2" height="2.2" fill="#c00000"/></svg>
<svg class="r" style="left:132px;top:676px;" width="17" height="17" viewBox="0 0 17 17"><path d="M0.5 0.5H9L13.5 5V15.5H0.5Z" fill="#fafafa" stroke="#c8c8c8"/><circle cx="11" cy="12.3" r="3.8" fill="#3a9a28"/><path d="M11 10.6V14M9.3 12.3H12.7" stroke="#fff" stroke-width="1"/></svg>
<svg class="r" style="left:154px;top:676px;" width="17" height="17" viewBox="0 0 17 17"><path d="M6.5 0.5H13L15.5 3V12.5H6.5Z" fill="#cfe0fb" stroke="#3a78d8"/><path d="M0.5 5.5H5L6 7H13.5V15.5H0.5Z" fill="#f8d86a" stroke="#e09030"/><path d="M0.5 9.5H13.5V15.5H0.5Z" fill="#f5e080" stroke="#e09030"/></svg>
<svg class="r" style="left:177px;top:676px;" width="17" height="17" viewBox="0 0 17 17"><rect x="0" y="0" width="16" height="16" rx="1" fill="#969696"/><rect x="4" y="1.5" width="8" height="5" fill="#fff"/><rect x="5" y="2.5" width="1.3" height="3" fill="#8a8a8a"/><rect x="3" y="10" width="10" height="4" fill="#fff"/><rect x="4" y="11" width="8" height="2" fill="#8a8a8a"/></svg>
<svg class="r" style="left:201px;top:676px;" width="17" height="17" viewBox="0 0 17 17"><rect x="0" y="0" width="10" height="10" fill="#8a8a8a"/><rect x="2" y="2" width="10" height="10" fill="#8a8a8a" stroke="#fff" stroke-width="0.6"/><rect x="4" y="4" width="10" height="11" fill="#8a8a8a" stroke="#fff" stroke-width="0.6"/><rect x="6" y="5" width="5" height="3" fill="#fff"/></svg>
<svg class="r" style="left:224px;top:676px;" width="17" height="17" viewBox="0 0 17 17"><path d="M0.5 0.5H9L12.5 4V15.5H0.5Z" fill="#fafafa" stroke="#c0c0c0"/><rect x="2.5" y="4.0" width="7" height="1" fill="#888"/><rect x="2.5" y="6.2" width="7" height="1" fill="#888"/><rect x="2.5" y="8.4" width="7" height="1" fill="#888"/><rect x="2.5" y="10.600000000000001" width="7" height="1" fill="#888"/><rect x="2.5" y="12.8" width="7" height="1" fill="#888"/><circle cx="11" cy="12" r="4" fill="#e8601a"/><rect x="8.5" y="11.3" width="5" height="1.6" fill="#fff"/></svg>
<svg class="r" style="left:246px;top:676px;" width="17" height="17" viewBox="0 0 17 17"><path d="M0.5 0.5H7L9.5 3V11.5H0.5Z" fill="#fafafa" stroke="#c0c0c0"/><path d="M3.5 2.5H10L12.5 5V13.5H3.5Z" fill="#fafafa" stroke="#c0c0c0"/><path d="M6.5 4.5H12L14.5 7V15.5H6.5Z" fill="#fafafa" stroke="#c0c0c0"/><circle cx="11.5" cy="12" r="4" fill="#e8601a"/><rect x="9" y="11.3" width="5" height="1.6" fill="#fff"/></svg>
<svg class="r" style="left:269px;top:676px;" width="17" height="17" viewBox="0 0 17 17"><path d="M4.5 0.5H10L12.5 3V7H4.5Z" fill="#c8ddfa" stroke="#3a78d8"/><rect x="0.5" y="6.5" width="15" height="6" rx="2" fill="#a8a8a8" stroke="#505050"/><rect x="2" y="7.5" width="12" height="2" fill="#e0e0e0"/><rect x="3.5" y="12" width="9" height="3" fill="#fff" stroke="#3a78d8"/></svg>
<div class="r" style="left:291px;top:675px;width:1px;height:18px;background:#a0a0a0;"></div>
<svg class="r" style="left:301px;top:676px;" width="14" height="16" viewBox="0 0 14 16"><path d="M5 0V9M11 2L6 10" stroke="#8e8e8e" stroke-width="2"/><circle cx="3.5" cy="12.5" r="2.5" fill="none" stroke="#8e8e8e" stroke-width="1.8"/><circle cx="9" cy="13" r="2.5" fill="none" stroke="#8e8e8e" stroke-width="1.8"/></svg>
<svg class="r" style="left:323px;top:676px;" width="17" height="17" viewBox="0 0 17 17"><path d="M0.5 0.5H7L9.5 3V11.5H0.5Z" fill="#fff" stroke="#9a9a9a"/><rect x="2" y="2" width="6" height="8" fill="#8e8e8e"/><path d="M6.5 4.5H13L15.5 7V15.5H6.5Z" fill="#fff" stroke="#9a9a9a"/><rect x="8" y="6" width="6" height="8" fill="#8e8e8e"/></svg>
<svg class="r" style="left:346px;top:676px;" width="17" height="17" viewBox="0 0 17 17"><rect x="0.5" y="1.5" width="11" height="14" rx="1" fill="#d8953a" stroke="#b07020"/><rect x="3" y="0" width="6" height="3" fill="#f0c060"/><path d="M5.5 6.5H12L15.5 10V15.5H5.5Z" fill="#d8e8fc" stroke="#3a78d8"/></svg>
<div class="r" style="left:368px;top:675px;width:1px;height:18px;background:#a0a0a0;"></div>
<svg class="r" style="left:377px;top:677px;" width="16" height="16" viewBox="0 0 16 16"><path d="M2.3 1.1H11.5L14.6 4.2V9.5L11.5 12.6H5V14.6L1 10.8L5 7V9H10.8L11.3 8.3V5.3L10.8 4.6H2.3Z" fill="#9a9a9a"/></svg>
<svg class="r" style="left:400px;top:676px;" width="16" height="16" viewBox="0 0 16 16"><path d="M14 14.8H4.5L1 11.3V6L4.5 3.3H10.8V1L14.9 5L10.8 8.9V6.8H5.2L4.7 7.5V10.5L5.2 11.2H14Z" fill="#9a9a9a"/></svg>
<div class="r" style="left:422px;top:675px;width:1px;height:18px;background:#a0a0a0;"></div>
<svg class="r" style="left:432px;top:678px;" width="14" height="13" viewBox="0 0 14 13"><rect x="0" y="4" width="6" height="8" rx="1" fill="#2a3440"/><rect x="8" y="4" width="6" height="8" rx="1" fill="#2a3440"/><rect x="1" y="1" width="4" height="4" fill="#3a4450"/><rect x="9" y="1" width="4" height="4" fill="#3a4450"/><rect x="5" y="5" width="4" height="3" fill="#2a3440"/><rect x="1" y="8" width="4" height="3" fill="#e0e0e0"/><rect x="9" y="8" width="4" height="3" fill="#e0e0e0"/></svg>
<svg class="r" style="left:452px;top:675px;" width="20" height="18" viewBox="0 0 20 18"><text x="1" y="8.5" font-family="Liberation Serif" font-style="italic" font-weight="bold" font-size="11" fill="#2a70e0" stroke="#2a70e0" stroke-width="0.4">b</text><text x="6" y="16.5" font-family="Liberation Serif" font-style="italic" font-weight="bold" font-size="15" fill="#3a88f0" stroke="#3a88f0" stroke-width="0.7">a</text><path d="M5 6.5L9 10" stroke="#30a040" stroke-width="1.8"/><path d="M7 11L10.3 11.2L10 7.8Z" fill="#30a040"/></svg>
<div class="r" style="left:476px;top:675px;width:1px;height:18px;background:#a0a0a0;"></div>
<svg class="r" style="left:485px;top:676px;" width="16" height="16" viewBox="0 0 16 16"><path d="M9 9.5L12.5 13.5" stroke="#b07a40" stroke-width="2.4" stroke-linecap="round"/><circle cx="5.8" cy="5.8" r="4.8" fill="#cfe2f8" stroke="#9ab8dc" stroke-width="0.9"/><circle cx="4.5" cy="4.5" r="2" fill="#eef6ff"/><rect x="6.5" y="5.3" width="7" height="2.8" fill="#3a9a3a"/><rect x="8.6" y="3.2" width="2.8" height="7" fill="#3a9a3a"/></svg>
<svg class="r" style="left:508px;top:676px;" width="16" height="16" viewBox="0 0 16 16"><path d="M9 9.5L12.5 13.5" stroke="#b07a40" stroke-width="2.4" stroke-linecap="round"/><circle cx="5.8" cy="5.8" r="4.8" fill="#cfe2f8" stroke="#9ab8dc" stroke-width="0.9"/><circle cx="4.5" cy="4.5" r="2" fill="#eef6ff"/><rect x="7" y="5" width="7.2" height="2.8" fill="#e8303a"/></svg>
<div class="r" style="left:530px;top:675px;width:1px;height:18px;background:#a0a0a0;"></div>
<svg class="r" style="left:539px;top:676px;" width="17" height="17" viewBox="0 0 17 17"><rect x="0.5" y="0.5" width="15" height="13" fill="#fff" stroke="#5a88c8"/><rect x="0.5" y="0.5" width="15" height="2" fill="#b8d0f0"/><path d="M8 1V13" stroke="#5a88c8"/><rect x="7.5" y="10" width="8" height="6" fill="#f0c040" stroke="#c09020" stroke-width="0.8"/><path d="M9 10V7.5Q11.5 5 14 7.5V10" fill="none" stroke="#a0a0a0" stroke-width="1.6"/></svg>
<svg class="r" style="left:562px;top:676px;" width="17" height="17" viewBox="0 0 17 17"><rect x="0.5" y="0.5" width="15" height="13" fill="#fff" stroke="#5a88c8"/><rect x="0.5" y="0.5" width="15" height="2" fill="#b8d0f0"/><path d="M1 7H15" stroke="#5a88c8"/><rect x="7.5" y="10" width="8" height="6" fill="#f0c040" stroke="#c09020" stroke-width="0.8"/><path d="M9 10V7.5Q11.5 5 14 7.5V10" fill="none" stroke="#a0a0a0" stroke-width="1.6"/></svg>
<div class="r" style="left:584px;top:675px;width:1px;height:18px;background:#a0a0a0;"></div>
<svg class="r" style="left:593px;top:677px;" width="16" height="16" viewBox="0 0 16 16"><rect x="0" y="1" width="9" height="1" fill="#222"/><rect x="0" y="3.5" width="12" height="1" fill="#222"/><rect x="0" y="6" width="7" height="1" fill="#222"/><path d="M8 8H15V13H11" fill="none" stroke="#3a78d8" stroke-width="1.2"/><path d="M10 13L13 11V15Z" fill="#3a78d8"/><rect x="0" y="10" width="10" height="3" fill="#8ab4e8"/></svg>
<svg class="r" style="left:619px;top:678px;" width="9" height="13" viewBox="0 0 9 13"><path d="M3 1H8V12M5.5 1V12" stroke="#6aa8e8" stroke-width="1.8" fill="none"/><circle cx="3" cy="4" r="3" fill="#6aa8e8"/></svg>
<svg class="r" style="left:641px;top:677px;" width="15" height="15" viewBox="0 0 15 15"><rect x="0" y="0" width="14" height="1" fill="#1a2ae8"/><rect x="5" y="2.5" width="5" height="1.5" fill="#1a2ae8"/><rect x="5" y="5" width="9" height="1.5" fill="#1a2ae8"/><rect x="5" y="7.5" width="7" height="1.5" fill="#1a2ae8"/><rect x="0" y="10.5" width="14" height="1" fill="#1a2ae8"/><rect x="5" y="13" width="2" height="1" fill="#1a2ae8"/><path d="M3 2V13" stroke="#e02020" stroke-dasharray="1 1"/><rect x="0" y="12" width="3" height="1" fill="#1a2ae8"/></svg>
<svg class="r" style="left:662px;top:677px;" width="15" height="15" viewBox="0 0 15 15"><rect x="0.5" y="0.5" width="14" height="13" fill="#eaf2fb" stroke="#5a88c8"/><rect x="0.5" y="0.5" width="14" height="2.5" fill="#9cc0ec"/><path d="M7 4H13L9.5 8H12L4 14L6.5 9H3.5Z" fill="#f2c43a" stroke="#d8a020" stroke-width="0.5"/></svg>
<svg class="r" style="left:685px;top:676px;" width="16" height="16" viewBox="0 0 16 16"><rect x="0.5" y="0.5" width="15" height="15" fill="#7ac870" stroke="#3a3a5a"/><path d="M1 1H8L5 9L1 10Z" fill="#e8e060"/><path d="M8 1H15V8L11 7Z" fill="#8cc0f0"/><path d="M1 10L5 9L7 15H1Z" fill="#c8d860"/><path d="M3 1L14 14M9 6L15 4" stroke="#e83030" stroke-width="1.1"/></svg>
<svg class="r" style="left:708px;top:676px;" width="16" height="16" viewBox="0 0 16 16"><path d="M0.5 0.5H10L15.5 6V15.5H0.5Z" fill="#fff" stroke="#606060"/><path d="M3 14L7 3Q8 1 10 2M3.5 8H8" stroke="#e02040" stroke-width="1.8" fill="none"/></svg>
<svg class="r" style="left:732px;top:679px;" width="15" height="12" viewBox="0 0 15 12"><path d="M0.5 0.5H5L6 2H14.5V11.5H0.5Z" fill="#f4c8c8" stroke="#d08080"/><rect x="0.5" y="4" width="14" height="7.5" fill="#f0b0b0"/></svg>
<svg class="r" style="left:754px;top:678px;" width="17" height="12" viewBox="0 0 17 12"><path d="M0.5 6Q8 -2 16 6Q8 14 0.5 6Z" fill="#fff" stroke="#d0a070"/><circle cx="8" cy="6" r="3.4" fill="#5a8ad0"/><circle cx="8" cy="6" r="1.4" fill="#102040"/></svg>
<div class="r" style="left:776px;top:675px;width:1px;height:18px;background:#a0a0a0;"></div>
<svg class="r" style="left:132px;top:706px;" width="13" height="13" viewBox="0 0 13 13"><rect x="0" y="0" width="13" height="13" rx="1" fill="#5a8ad8"/><rect x="3" y="0.5" width="7" height="3.5" fill="#e8f0fa"/><rect x="2" y="8" width="9" height="4" fill="#a8d890"/><rect x="1" y="5" width="11" height="2.5" fill="#7aa8e8"/></svg>
<svg class="r" style="left:191px;top:707px;" width="11" height="11" viewBox="0 0 11 11"><rect x="0" y="0" width="11" height="11" fill="#a8788e"/><path d="M2.5 2.5L8.5 8.5M8.5 2.5L2.5 8.5" stroke="#fff" stroke-width="1.8"/></svg>
<div class="t" style="left:147.20px;top:705.44px;font-size:12.00px;line-height:16px;color:#000;transform-origin:0 12.16px;transform:scale(0.8556,1.0000);">result.txt</div>
<div class="r" style="left:128px;top:723px;width:700px;height:1px;background:#a0a0a0;"></div>
<div class="r" style="left:128px;top:723px;width:1px;height:300px;background:#a0a0a0;"></div>
<div class="r" style="left:129px;top:724px;width:700px;height:1px;background:#696969;"></div>
<div class="r" style="left:129px;top:724px;width:1px;height:300px;background:#696969;"></div>
<div class="r" style="left:130px;top:725px;width:51px;height:300px;background:#e4e4e4;"></div>
<div class="r" style="left:181px;top:725px;width:700px;height:1px;background:#f0f0ff;"></div>
<div class="r" style="left:181px;top:726px;width:700px;height:18px;background:#e8e8ff;"></div>
<div class="r" style="left:182px;top:726px;width:1px;height:18px;background:#8000ff;"></div>
<div class="t" style="left:153.00px;top:726.21px;font-size:15.00px;line-height:20px;color:#8c8c8c;transform-origin:0 13.99px;transform:scale(1.0000,0.9000);;font-family:'Liberation Mono',monospace">1</div>
<div class="t" style="left:182.00px;top:726.21px;font-size:15.00px;line-height:20px;color:#2e2e2e;transform-origin:0 13.99px;transform:scale(1.0000,0.9000);;font-family:'Liberation Mono',monospace">Searched names ... ac0513nf ac0891 stf1203</div>
<div class="t" style="left:153.00px;top:744.21px;font-size:15.00px;line-height:20px;color:#8c8c8c;transform-origin:0 13.99px;transform:scale(1.0000,0.9000);;font-family:'Liberation Mono',monospace">2</div>
<div class="t" style="left:153.00px;top:762.21px;font-size:15.00px;line-height:20px;color:#8c8c8c;transform-origin:0 13.99px;transform:scale(1.0000,0.9000);;font-family:'Liberation Mono',monospace">3</div>
<div class="t" style="left:182.00px;top:762.21px;font-size:15.00px;line-height:20px;color:#2e2e2e;transform-origin:0 13.99px;transform:scale(1.0000,0.9000);;font-family:'Liberation Mono',monospace">Searched names ... ac0513nf ac0891</div>
<div class="t" style="left:153.00px;top:780.21px;font-size:15.00px;line-height:20px;color:#8c8c8c;transform-origin:0 13.99px;transform:scale(1.0000,0.9000);;font-family:'Liberation Mono',monospace">4</div>
<div class="t" style="left:153.00px;top:798.21px;font-size:15.00px;line-height:20px;color:#8c8c8c;transform-origin:0 13.99px;transform:scale(1.0000,0.9000);;font-family:'Liberation Mono',monospace">5</div>
<div class="t" style="left:182.00px;top:798.21px;font-size:15.00px;line-height:20px;color:#2e2e2e;transform-origin:0 13.99px;transform:scale(1.0000,0.9000);;font-family:'Liberation Mono',monospace">Searched names ... ac0513nf stf1203</div>
<div class="t" style="left:153.00px;top:816.21px;font-size:15.00px;line-height:20px;color:#8c8c8c;transform-origin:0 13.99px;transform:scale(1.0000,0.9000);;font-family:'Liberation Mono',monospace">6</div>
<div class="t" style="left:182.00px;top:816.21px;font-size:15.00px;line-height:20px;color:#2e2e2e;transform-origin:0 13.99px;transform:scale(1.0000,0.9000);;font-family:'Liberation Mono',monospace">E:\tmp\ppp\hhh\251320wsf12.asm.1</div>
<div class="t" style="left:153.00px;top:834.21px;font-size:15.00px;line-height:20px;color:#8c8c8c;transform-origin:0 13.99px;transform:scale(1.0000,0.9000);;font-family:'Liberation Mono',monospace">7</div>
<div class="t" style="left:153.00px;top:852.21px;font-size:15.00px;line-height:20px;color:#8c8c8c;transform-origin:0 13.99px;transform:scale(1.0000,0.9000);;font-family:'Liberation Mono',monospace">8</div>
<div class="t" style="left:182.00px;top:852.21px;font-size:15.00px;line-height:20px;color:#2e2e2e;transform-origin:0 13.99px;transform:scale(1.0000,0.9000);;font-family:'Liberation Mono',monospace">Searched names ... ac0891 stf1203</div>
<div class="t" style="left:153.00px;top:870.21px;font-size:15.00px;line-height:20px;color:#8c8c8c;transform-origin:0 13.99px;transform:scale(1.0000,0.9000);;font-family:'Liberation Mono',monospace">9</div>
<div class="t" style="left:182.00px;top:870.21px;font-size:15.00px;line-height:20px;color:#2e2e2e;transform-origin:0 13.99px;transform:scale(1.0000,0.9000);;font-family:'Liberation Mono',monospace">E:\tmp\ppp\hhh\251320.asm.1</div>
<div class="t" style="left:144.00px;top:888.21px;font-size:15.00px;line-height:20px;color:#8c8c8c;transform-origin:0 13.99px;transform:scale(1.0000,0.9000);;font-family:'Liberation Mono',monospace">10</div>
<div class="t" style="left:182.00px;top:888.21px;font-size:15.00px;line-height:20px;color:#2e2e2e;transform-origin:0 13.99px;transform:scale(1.0000,0.9000);;font-family:'Liberation Mono',monospace">E:\tmp\ppp\hhh\251320ws.asm.1</div>
<div class="t" style="left:144.00px;top:906.21px;font-size:15.00px;line-height:20px;color:#8c8c8c;transform-origin:0 13.99px;transform:scale(1.0000,0.9000);;font-family:'Liberation Mono',monospace">11</div>
</body></html>
